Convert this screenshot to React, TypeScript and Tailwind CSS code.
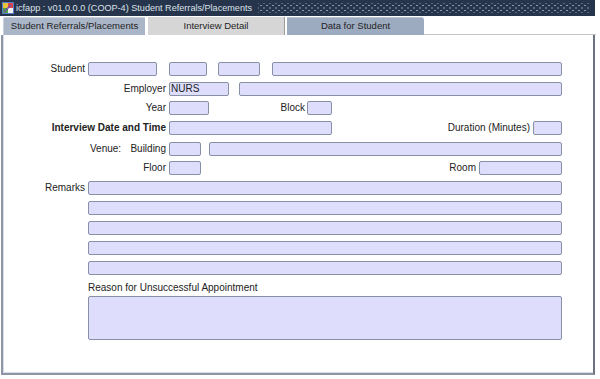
import React from "react";

const F = ({ w, children, extra = "" }: { w: string; children?: React.ReactNode; extra?: string }) => (
  <div
    className={`${w} h-[14px] shrink-0 bg-[#dedefc] border border-[#8890a6] rounded-[2px] text-[10px] leading-[12px] pl-[1px] text-[#222] ${extra}`}
  >
    {children}
  </div>
);

const L = ({ w, children, bold = false }: { w: string; children?: React.ReactNode; bold?: boolean }) => (
  <div className={`${w} shrink-0 text-right text-[10px] leading-[14px] text-[#222] ${bold ? "font-bold" : ""}`}>{children}</div>
);

export default function App() {
  return (
    <div className="w-[600px] h-[379px] bg-white overflow-hidden font-['Liberation_Sans',Arial,sans-serif] flex flex-col">
      {/* Title bar */}
      <div className="w-[595px] h-[16px] bg-[#26354b] flex items-center shrink-0">
        <div className="ml-[2px] w-[12px] h-[12px] relative shrink-0">
          <svg width="12" height="12" viewBox="0 0 12 12">
            <rect x="0" y="0" width="12" height="12" fill="#5a78c8" />
            <rect x="1" y="1" width="5" height="5" fill="#e8c23a" />
            <rect x="6" y="1" width="5" height="5" fill="#d84a4a" />
            <rect x="1" y="6" width="5" height="5" fill="#4aa84a" />
            <rect x="6" y="6" width="5" height="5" fill="#f0f0f0" />
            <path d="M2 10 L9 3" stroke="#7a3fb0" strokeWidth="1.5" />
          </svg>
        </div>
        <div className="ml-[2px] text-[9.1px] text-[#dde2ea] whitespace-nowrap leading-[16px]">
          icfapp : v01.0.0.0 (COOP-4) Student Referrals/Placements
        </div>
        <div className="ml-[6px] mr-[5px] flex-1 h-[10px] [background-image:radial-gradient(circle,#8a99b0_0.7px,transparent_1.1px),radial-gradient(circle,#8a99b0_0.7px,transparent_1.1px)] [background-size:6px_5px] [background-position:0_0,3px_2.5px]" />
      </div>

      {/* Tabs */}
      <div className="h-[19px] flex items-end shrink-0 pl-[3px] w-[596px]">
        <div className="w-[142px] h-[18px] bg-[#aab6c7] border-t border-l border-[#c8d0dc] rounded-tl-[2px] flex items-center justify-center text-[9.6px] text-[#1e1e1e]">
          Student Referrals/Placements
        </div>
        <div className="ml-[2px] w-[138px] h-[19px] bg-[#d6d6d6] border-t border-l border-white border-r border-r-[#9a9a9a] rounded-tr-[2px] flex items-center justify-center text-[9.5px] text-[#1e1e1e]">
          Interview Detail
        </div>
        <div className="ml-[2px] w-[137px] h-[18px] bg-[#9dabc0] border-t border-[#b8c2d0] rounded-tr-[3px] flex items-center justify-center text-[9.5px] text-[#1e1e1e]">
          Data for Student
        </div>
        <div className="flex-1 h-[19px] border-b border-[#c4c4c4]" />
      </div>

      {/* Panel */}
      <div className="ml-[1px] w-[594px] h-[340px] border-l-2 border-b-2 border-r-2 border-l-[#8e96a6] border-b-[#8e96a6] border-r-[#6b7282] shrink-0">
        <div className="h-full border-l border-b border-[#d8dce4] pt-[27px] flex flex-col">
          {/* Student */}
          <div className="flex items-center h-[14px]">
            <L w="w-[81px]">Student</L>
            <F w="w-[69px] ml-[3px]" />
            <F w="w-[38px] ml-[12px]" />
            <F w="w-[42px] ml-[11px]" />
            <F w="w-[290px] ml-[12px]" />
          </div>
          {/* Employer */}
          <div className="flex items-center h-[14px] mt-[6px]">
            <L w="w-[162px]">Employer</L>
            <F w="w-[60px] ml-[3px]">NURS</F>
            <F w="w-[323px] ml-[10px]" />
          </div>
          {/* Year */}
          <div className="flex items-center h-[14px] mt-[5px]">
            <L w="w-[162px]">Year</L>
            <F w="w-[40px] ml-[3px]" />
            <L w="w-[96px]">Block</L>
            <F w="w-[25px] ml-[2px]" />
          </div>
          {/* Interview */}
          <div className="flex items-center h-[14px] mt-[6px]">
            <L w="w-[162px]" bold>
              Interview Date and Time
            </L>
            <F w="w-[163px] ml-[3px]" />
            <L w="w-[198px]">Duration (Minutes)</L>
            <F w="w-[29px] ml-[3px]" />
          </div>
          {/* Venue */}
          <div className="flex items-center h-[14px] mt-[7px]">
            <div className="w-[162px] shrink-0 pl-[86px] flex justify-between text-[10px] leading-[14px] text-[#222]">
              <span>Venue:</span>
              <span>Building</span>
            </div>
            <F w="w-[32px] ml-[3px]" />
            <F w="w-[353px] ml-[8px]" />
          </div>
          {/* Floor */}
          <div className="flex items-center h-[14px] mt-[5px]">
            <L w="w-[162px]">Floor</L>
            <F w="w-[32px] ml-[3px]" />
            <L w="w-[275px]">Room</L>
            <F w="w-[83px] ml-[3px]" />
          </div>
          {/* Remarks */}
          <div className="flex items-center h-[14px] mt-[6px]">
            <L w="w-[81px]">Remarks</L>
            <F w="w-[474px] ml-[3px]" />
          </div>
          <div className="flex items-center h-[14px] mt-[6px]">
            <F w="w-[474px] ml-[84px]" />
          </div>
          <div className="flex items-center h-[14px] mt-[6px]">
            <F w="w-[474px] ml-[84px]" />
          </div>
          <div className="flex items-center h-[14px] mt-[6px]">
            <F w="w-[474px] ml-[84px]" />
          </div>
          <div className="flex items-center h-[14px] mt-[6px]">
            <F w="w-[474px] ml-[84px]" />
          </div>
          <div className="ml-[84px] mt-[6px] text-[10px] leading-[14px] text-[#222]">
            Reason for Unsuccessful Appointment
          </div>
          <div className="ml-[84px] mt-[1px] w-[474px] h-[44px] bg-[#dedefc] border border-[#8890a6] rounded-[2px]" />
        </div>
      </div>
    </div>
  );
}
